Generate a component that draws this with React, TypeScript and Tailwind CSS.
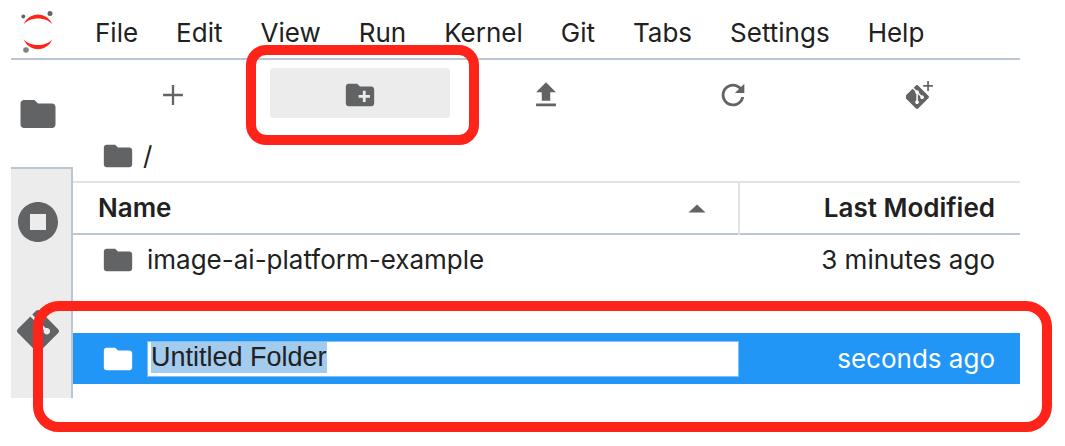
import { useEffect, useRef } from "react";
import type { ReactNode } from "react";

const MENUS = ["File", "Edit", "View", "Run", "Kernel", "Git", "Tabs", "Settings", "Help"];

const FOLDER =
  "M10 4H4c-1.1 0-1.99.9-1.99 2L2 18c0 1.1.9 2 2 2h16c1.1 0 2-.9 2-2V8c0-1.1-.9-2-2-2h-8l-2-2z";
const NEW_FOLDER =
  "M20 6h-8l-2-2H4c-1.11 0-1.99.89-1.99 2L2 18c0 1.11.89 2 2 2h16c1.11 0 2-.89 2-2V8c0-1.11-.89-2-2-2zm-1 8h-3v3h-2v-3h-3v-2h3V9h2v3h3v2z";
const UPLOAD = "M5 20h14v-2H5v2zM5 10h4v6h6v-6h4l-7-7-7 7z";
const REFRESH =
  "M9 13.5c-2.49 0-4.5-2.01-4.5-4.5S6.51 4.5 9 4.5c1.24 0 2.36.52 3.17 1.33L10 8h5V3l-1.76 1.76C12.15 3.68 10.66 3 9 3 5.69 3 3.01 5.69 3.01 9S5.69 15 9 15c2.97 0 5.43-2.16 5.9-5h-1.52c-.46 2-2.24 3.5-4.38 3.5z";
const STOP = "M12 2C6.48 2 2 6.48 2 12s4.48 10 10 10 10-4.48 10-10S17.52 2 12 2zm4 14H8V8h8v8z";
const GIT =
  "M23.546 10.93L13.067.452c-.604-.603-1.582-.603-2.188 0L8.708 2.627l2.76 2.76c.645-.215 1.379-.07 1.889.441.516.515.658 1.258.438 1.9l2.658 2.66c.645-.223 1.387-.078 1.9.435.721.72.721 1.884 0 2.604-.719.719-1.881.719-2.6 0-.539-.541-.674-1.337-.404-1.996L12.86 8.955v6.525c.176.086.342.203.488.348.713.721.713 1.883 0 2.6-.719.721-1.889.721-2.609 0-.719-.719-.719-1.879 0-2.598.182-.18.387-.316.605-.406V8.835c-.217-.091-.424-.222-.6-.401-.545-.545-.676-1.342-.396-2.009L7.636 3.7.45 10.881c-.6.605-.6 1.584 0 2.189l10.48 10.477c.604.604 1.582.604 2.186 0l10.43-10.43c.605-.603.605-1.582 0-2.187";

function Icon({ d, className, box = "0 0 24 24" }: { d: string; className: string; box?: string }) {
  return (
    <svg viewBox={box} className={className} fill="currentColor" aria-hidden="true">
      <path d={d} />
    </svg>
  );
}

function JupyterLogo() {
  return (
    <svg viewBox="0 0 40 50" className="h-[50px] w-10" aria-hidden="true">
      <path d="M6.5 17.5C12 4 30 4 35.5 17.5C29 9.5 13 9.5 6.5 17.5Z" fill="#ff2419" />
      <path d="M6.5 32C12 45.5 30 45.5 35.5 32C29 40 13 40 6.5 32Z" fill="#ff2419" />
      <circle cx="33" cy="6.500" r="2.500" fill="#616365" />
      <circle cx="6.300" cy="9.500" r="1.900" fill="#616365" />
      <circle cx="9" cy="43" r="2.800" fill="#7d838a" />
    </svg>
  );
}

function ToolButton({ label, active, children }: { label: string; active?: boolean; children: ReactNode }) {
  return (
    <div className="relative flex-1">
      <button
        type="button"
        aria-label={label}
        className={
          active
            ? "flex h-[50px] w-full items-center justify-center rounded bg-[#ececec] pt-1"
            : "flex h-[50px] w-full items-center justify-center rounded pt-1"
        }
      >
        {children}
      </button>
      {active && (
        <div className="pointer-events-none absolute -top-[23px] -right-[29px] -bottom-[27px] -left-6 rounded-[20px] border-10 border-[#ff2419]" />
      )}
    </div>
  );
}

function NameInput() {
  const ref = useRef<HTMLInputElement>(null);
  useEffect(() => {
    ref.current?.focus();
    ref.current?.select();
  }, []);
  return (
    <input
      ref={ref}
      type="text"
      aria-label="Folder name"
      defaultValue="Untitled Folder"
      className="h-9 min-w-0 flex-1 border border-[#7fbef5] bg-white px-[3px] pb-[2px] font-['Liberation_Sans',sans-serif] text-[27px] leading-8 text-[#212121] outline-none selection:bg-[#a3cbee] selection:text-[#212121]"
    />
  );
}

export default function App() {
  return (
    <div className="mr-[45px] ml-[11px] pb-[47px] font-['Inter',sans-serif] text-[26px] leading-8 text-[#212121]">
      <header className="flex h-[60px] items-center border-b-2 border-[#bac6d3] pt-[6px] pl-[6px]">
        <JupyterLogo />
        <nav className="ml-[38px] flex gap-[38px] pt-[2px]">
          {MENUS.map((m) => (
            <button key={m} type="button">
              {m}
            </button>
          ))}
        </nav>
      </header>

      <div className="flex">
        <aside className="flex w-[62px] flex-col text-[#616365]">
          <button type="button" aria-label="File Browser" className="flex h-[107px] items-center justify-center pr-2">
            <Icon d={FOLDER} className="size-[42px]" />
          </button>
          <div className="flex flex-1 flex-col items-center gap-16 border-t-2 border-r-2 border-[#bac6d3] bg-[#ececec] pt-[29px] pr-[6px]">
            <button type="button" aria-label="Running Kernels">
              <Icon d={STOP} className="size-12" />
            </button>
            <button type="button" aria-label="Git">
              <Icon d={GIT} className="size-[42px]" />
            </button>
          </div>
        </aside>

        <main className="min-w-0 flex-1">
          <div className="flex gap-[6px] px-[10px] pt-2 text-[#616365]">
            <ToolButton label="New Launcher">
              <Icon d="M19 12.800h-6.200V19h-1.600v-6.200H5v-1.600h6.200V5h1.600v6.200H19v1.600z" className="size-[34px]" />
            </ToolButton>
            <ToolButton label="New Folder" active>
              <Icon d={NEW_FOLDER} className="size-[34px]" />
            </ToolButton>
            <ToolButton label="Upload Files">
              <Icon d={UPLOAD} className="size-[34px]" />
            </ToolButton>
            <ToolButton label="Refresh">
              <Icon d={REFRESH} box="0 0 18 18" className="size-[34px]" />
            </ToolButton>
            <ToolButton label="Git Clone">
              <svg viewBox="0 0 28 28" className="size-7" fill="currentColor" aria-hidden="true">
                <g transform="translate(-1 4)">
                  <path d={GIT} />
                </g>
                <path d="M21.200 0h1.700v4h4v1.700h-4v4.300h-1.700V5.700h-4V4h4z" />
              </svg>
            </ToolButton>
          </div>

          <div className="flex h-[63px] items-center gap-2 pt-3 pl-7">
            <Icon d={FOLDER} className="size-[34px] text-[#616365]" />
            <a href="#root">/</a>
          </div>

          <table className="w-full table-fixed border-collapse">
            <thead>
              <tr className="h-[52px] border-t-2 border-b-2 border-t-[#e0e2e5] border-b-[#bac6d3]">
                <th scope="col" className="pr-8 pl-[25px] text-left font-semibold">
                  <div className="flex items-center justify-between">
                    Name
                    <svg viewBox="0 0 18 9" className="h-[9px] w-[18px]" fill="#616365" aria-hidden="true">
                      <path d="M0.500 8.500L9 0.500L17.500 8.500z" />
                    </svg>
                  </div>
                </th>
                <th scope="col" className="w-[281px] border-l-2 border-[#e0e2e5] pr-[25px] text-right font-semibold">
                  Last Modified
                </th>
              </tr>
            </thead>
            <tbody>
              <tr>
                <td className="pt-2 pb-14 pl-7">
                  <div className="flex items-center gap-3">
                    <Icon d={FOLDER} className="size-[34px] text-[#616365]" />
                    image-ai-platform-example
                  </div>
                </td>
                <td className="pt-2 pb-14 pr-[25px] text-right">3 minutes ago</td>
              </tr>
              <tr className="relative h-[51px] bg-[#2196f7] text-white">
                <td className="pl-7">
                  <div className="flex items-center gap-3">
                    <Icon d={FOLDER} className="size-[34px]" />
                    <NameInput />
                  </div>
                </td>
                <td className="pr-[25px] text-right">
                  seconds ago
                  <div className="pointer-events-none absolute -top-8 -right-8 -bottom-12 -left-10 rounded-[26px] border-10 border-[#ff2419]" />
                </td>
              </tr>
            </tbody>
          </table>
          <div className="h-[14px]" />
        </main>
      </div>
    </div>
  );
}
